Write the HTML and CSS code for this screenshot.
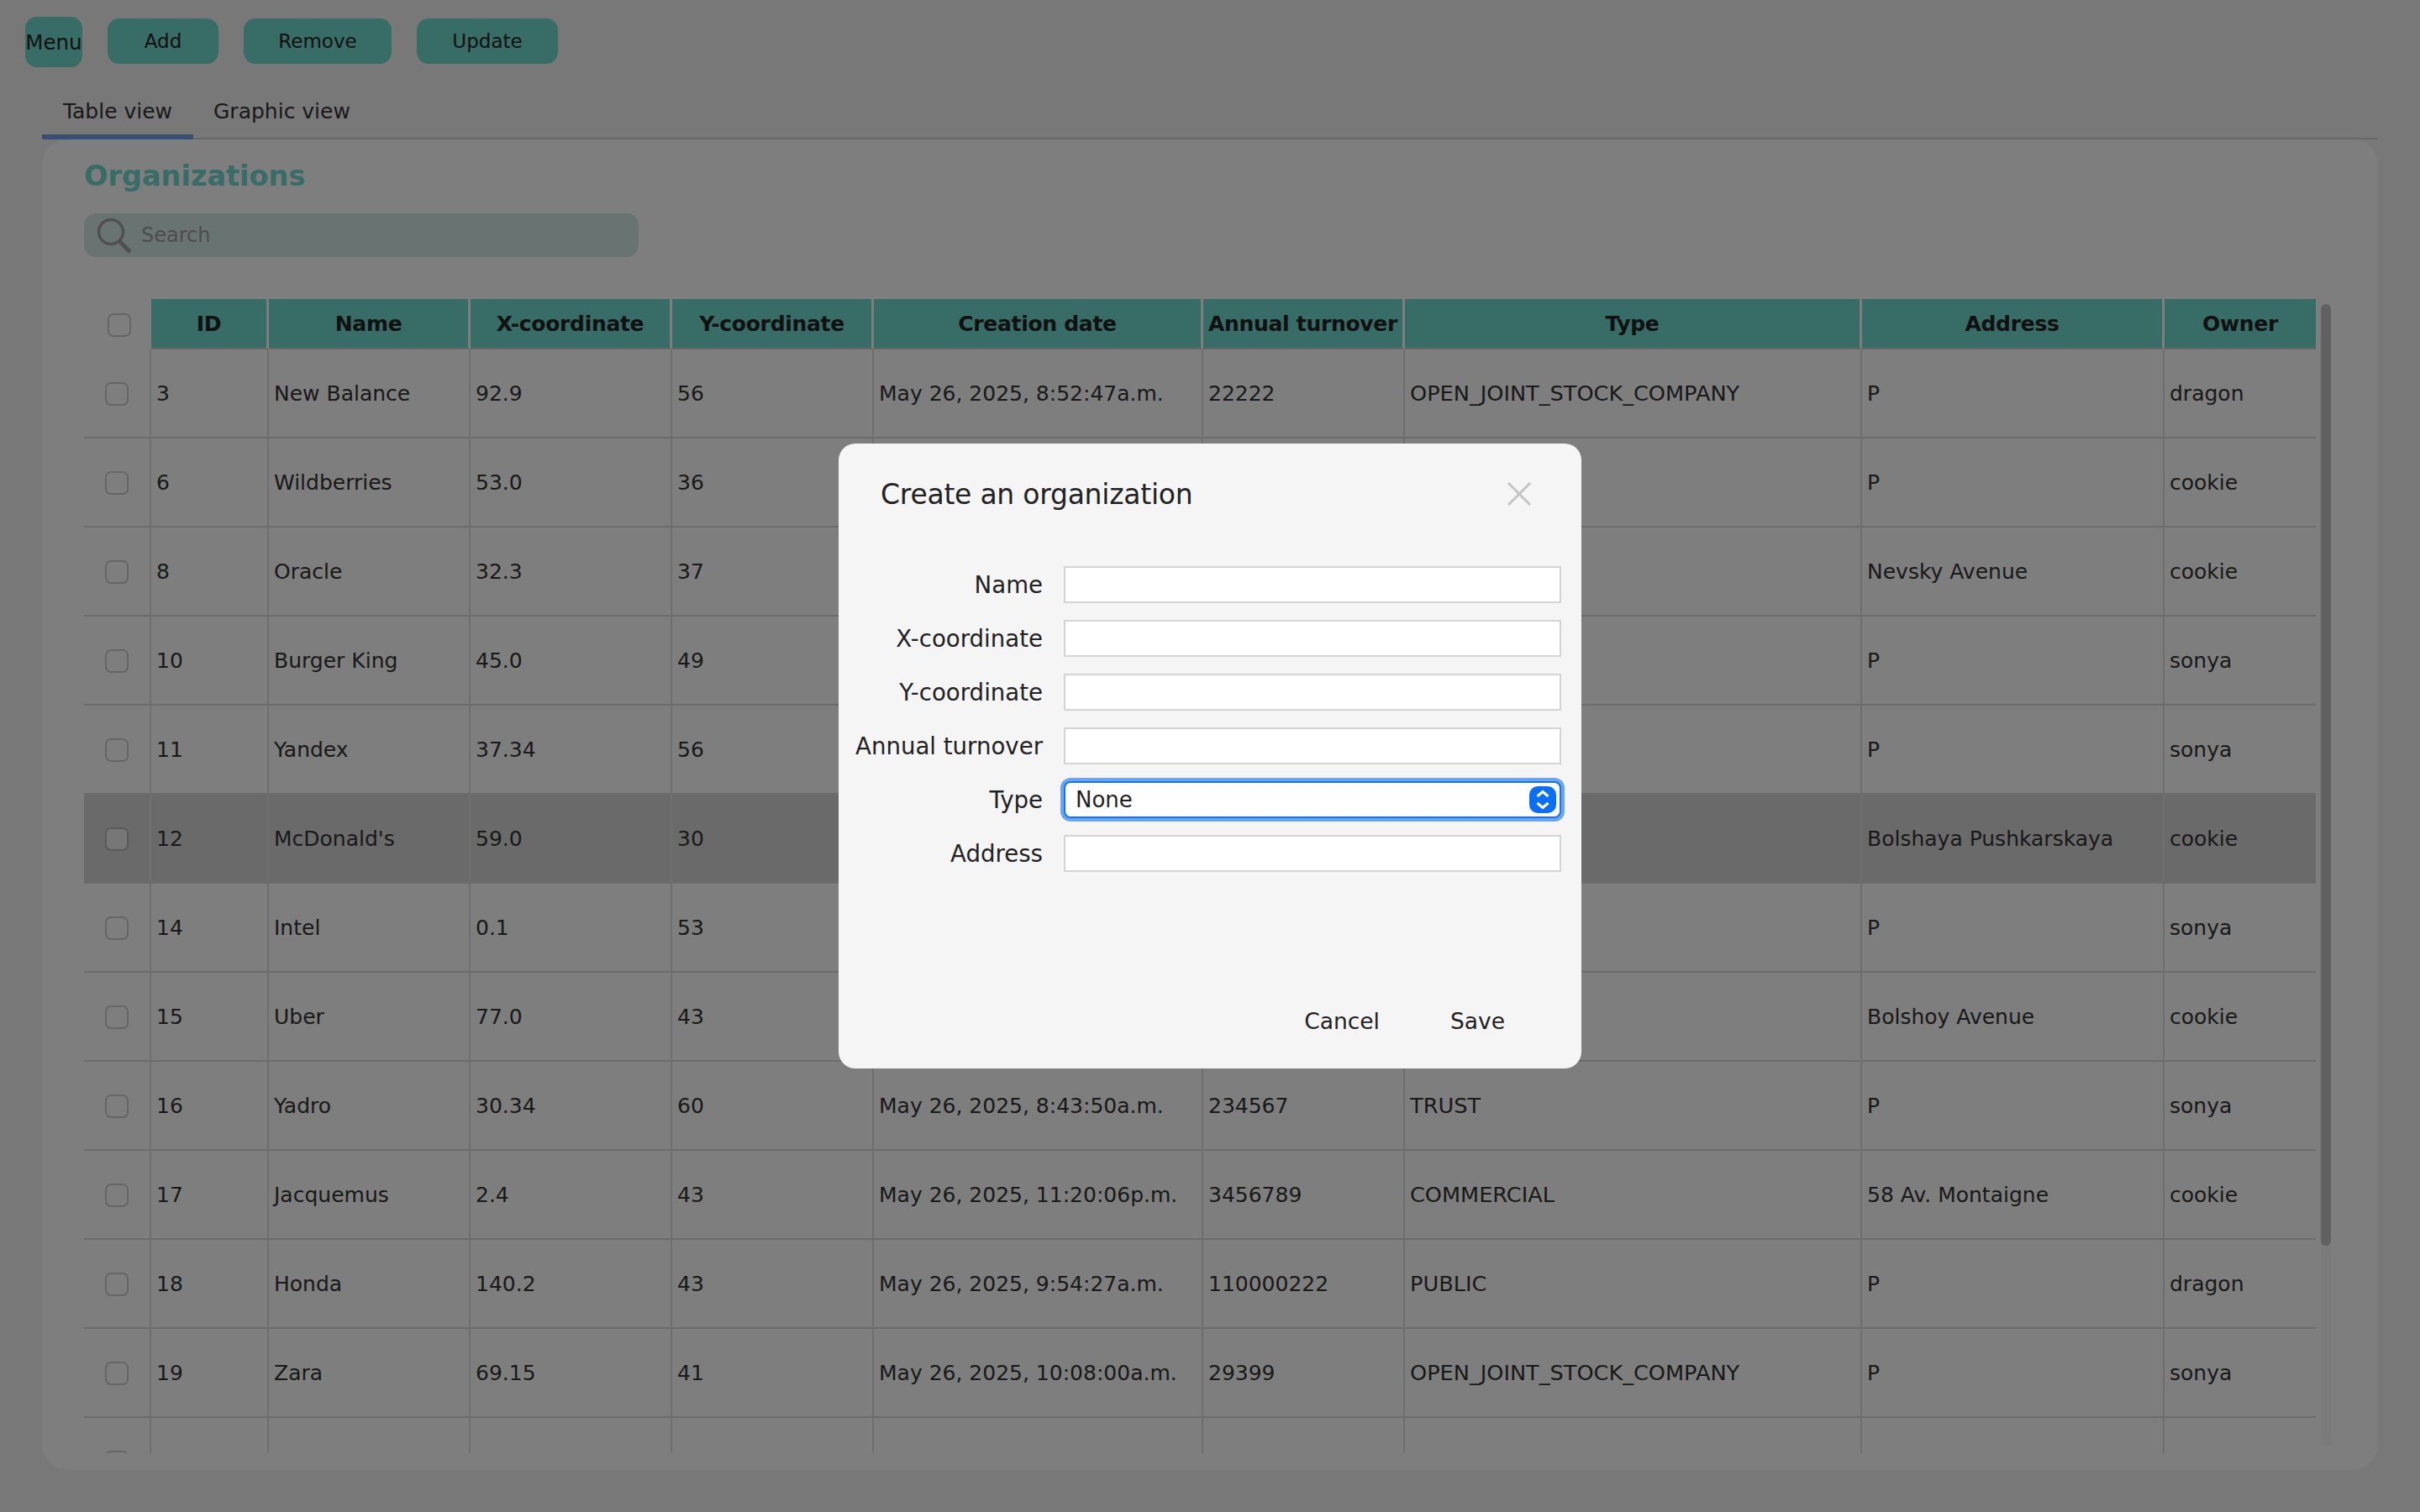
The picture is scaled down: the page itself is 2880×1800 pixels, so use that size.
FILE: index.html
```html
<!DOCTYPE html>
<html>
<head>
<meta charset="utf-8">
<title>Organizations</title>
<link rel="stylesheet" href="styles.css">
</head>
<body>

<div class="toolbar">
  <button class="tool tool-menu">Menu</button>
  <button class="tool tool-add">Add</button>
  <button class="tool tool-remove">Remove</button>
  <button class="tool tool-update">Update</button>
</div>

<div class="tabs">
  <div class="tab tab-active">Table view</div>
  <div class="tab">Graphic view</div>
</div>

<div class="panel">
  <h2 class="panel-title">Organizations</h2>
  <div class="search">
    <svg class="search-icon" viewBox="0 0 44 44" width="44" height="44">
      <circle cx="18" cy="18" r="14.5" fill="none" stroke="#a0a0a0" stroke-width="3.5"/>
      <line x1="28" y1="29" x2="41" y2="42" stroke="#a0a0a0" stroke-width="5"/>
    </svg>
    <span class="search-text">Search</span>
  </div>

  <div class="table-wrap">
    <table class="org-table">
      <colgroup>
        <col class="c-check"><col class="c-id"><col class="c-name"><col class="c-x"><col class="c-y">
        <col class="c-date"><col class="c-turn"><col class="c-type"><col class="c-addr"><col class="c-owner">
      </colgroup>
      <thead>
        <tr>
          <th class="check-head"><span class="check"></span></th>
          <th>ID</th><th>Name</th><th>X-coordinate</th><th>Y-coordinate</th>
          <th>Creation date</th><th>Annual turnover</th><th>Type</th><th>Address</th><th>Owner</th>
        </tr>
      </thead>
      <tbody>
        <tr>
          <td class="check-cell"><span class="check"></span></td>
          <td>3</td><td>New Balance</td><td>92.9</td><td>56</td>
          <td>May 26, 2025, 8:52:47a.m.</td><td>22222</td><td>OPEN_JOINT_STOCK_COMPANY</td><td>P</td><td>dragon</td>
        </tr>
        <tr>
          <td class="check-cell"><span class="check"></span></td>
          <td>6</td><td>Wildberries</td><td>53.0</td><td>36</td>
          <td></td><td></td><td></td><td>P</td><td>cookie</td>
        </tr>
        <tr>
          <td class="check-cell"><span class="check"></span></td>
          <td>8</td><td>Oracle</td><td>32.3</td><td>37</td>
          <td></td><td></td><td></td><td>Nevsky Avenue</td><td>cookie</td>
        </tr>
        <tr>
          <td class="check-cell"><span class="check"></span></td>
          <td>10</td><td>Burger King</td><td>45.0</td><td>49</td>
          <td></td><td></td><td></td><td>P</td><td>sonya</td>
        </tr>
        <tr>
          <td class="check-cell"><span class="check"></span></td>
          <td>11</td><td>Yandex</td><td>37.34</td><td>56</td>
          <td></td><td></td><td></td><td>P</td><td>sonya</td>
        </tr>
        <tr class="selected">
          <td class="check-cell"><span class="check"></span></td>
          <td>12</td><td>McDonald's</td><td>59.0</td><td>30</td>
          <td></td><td></td><td></td><td>Bolshaya Pushkarskaya</td><td>cookie</td>
        </tr>
        <tr>
          <td class="check-cell"><span class="check"></span></td>
          <td>14</td><td>Intel</td><td>0.1</td><td>53</td>
          <td></td><td></td><td></td><td>P</td><td>sonya</td>
        </tr>
        <tr>
          <td class="check-cell"><span class="check"></span></td>
          <td>15</td><td>Uber</td><td>77.0</td><td>43</td>
          <td></td><td></td><td></td><td>Bolshoy Avenue</td><td>cookie</td>
        </tr>
        <tr>
          <td class="check-cell"><span class="check"></span></td>
          <td>16</td><td>Yadro</td><td>30.34</td><td>60</td>
          <td>May 26, 2025, 8:43:50a.m.</td><td>234567</td><td>TRUST</td><td>P</td><td>sonya</td>
        </tr>
        <tr>
          <td class="check-cell"><span class="check"></span></td>
          <td>17</td><td>Jacquemus</td><td>2.4</td><td>43</td>
          <td>May 26, 2025, 11:20:06p.m.</td><td>3456789</td><td>COMMERCIAL</td><td>58 Av. Montaigne</td><td>cookie</td>
        </tr>
        <tr>
          <td class="check-cell"><span class="check"></span></td>
          <td>18</td><td>Honda</td><td>140.2</td><td>43</td>
          <td>May 26, 2025, 9:54:27a.m.</td><td>110000222</td><td>PUBLIC</td><td>P</td><td>dragon</td>
        </tr>
        <tr>
          <td class="check-cell"><span class="check"></span></td>
          <td>19</td><td>Zara</td><td>69.15</td><td>41</td>
          <td>May 26, 2025, 10:08:00a.m.</td><td>29399</td><td>OPEN_JOINT_STOCK_COMPANY</td><td>P</td><td>sonya</td>
        </tr>
        <tr>
          <td class="check-cell"><span class="check"></span></td>
          <td></td><td></td><td></td><td></td><td></td><td></td><td></td><td></td><td></td>
        </tr>
      </tbody>
    </table>
    <div class="scrollbar"><div class="scroll-thumb"></div></div>
  </div>
</div>

<div class="overlay">
  <div class="dialog">
    <div class="dialog-head">
      <span class="dialog-title">Create an organization</span>
      <svg class="dialog-close" viewBox="0 0 28 28" width="28" height="28">
        <path d="M1 1 L27 27 M27 1 L1 27" fill="none" stroke="#c4c4c4" stroke-width="3"/>
      </svg>
    </div>
    <form class="dialog-form">
      <label class="field-label">Name</label><input class="field" type="text">
      <label class="field-label">X-coordinate</label><input class="field" type="text">
      <label class="field-label">Y-coordinate</label><input class="field" type="text">
      <label class="field-label">Annual turnover</label><input class="field" type="text">
      <label class="field-label">Type</label>
      <div class="select">
        <span>None</span>
        <svg class="select-arrows" viewBox="0 0 32 32" width="32" height="32">
          <rect width="32" height="32" rx="10" fill="#0a6ff5"/>
          <path d="M9.5 12 L16 6.5 L22.5 12 M9.5 20 L16 25.5 L22.5 20" fill="none" stroke="#fff" stroke-width="3"/>
        </svg>
      </div>
      <label class="field-label">Address</label><input class="field" type="text">
    </form>
    <div class="dialog-actions">
      <span class="action">Cancel</span>
      <span class="action">Save</span>
    </div>
  </div>
</div>

</body>
</html>
```

FILE: styles.css
```css
html, body {
  margin: 0;
  height: 100%;
}

body {
  position: relative;
  width: 2880px;
  height: 1800px;
  overflow: hidden;
  background-color: #f1f1f1;
  font-family: "DejaVu Sans", sans-serif;
  font-size: 25px;
  color: #333;
}

.toolbar {
  display: flex;
  align-items: flex-start;
  gap: 30px;
  height: 60px;
  padding: 20px 0 0 30px;
}

.tool {
  height: 54px;
  margin-top: 2px;
  padding: 0;
  border: none;
  border-radius: 14px;
  background-color: #70d8ce;
  color: #222;
  font-family: inherit;
  font-size: 23px;
}

.tool-menu {
  width: 68px;
  height: 60px;
  margin-top: 0;
  font-size: 24.5px;
}

.tool-add { width: 132px; }
.tool-remove { width: 176px; }
.tool-update { width: 168px; }

.tabs {
  display: flex;
  height: 86px;
  margin: 0 50px;
  box-sizing: border-box;
  border-bottom: 2px solid #cfcfcf;
}

.tab {
  padding: 38px 24px 0;
  font-size: 25px;
  color: #333;
}

.tab-active {
  width: 180px;
  box-sizing: border-box;
  margin-bottom: -2px;
  padding: 38px 0 0;
  text-align: center;
  border-bottom: 6px solid #6f9fe0;
  border-radius: 2px;
}

.panel {
  height: 1563px;
  margin: 0 50px;
  padding: 21px 0 0 50px;
  border-radius: 30px;
  background-color: #fcfcfc;
}

.panel-title {
  margin: 0;
  font-size: 33.5px;
  line-height: 46px;
  font-weight: bold;
  color: #70d8ce;
}

.search {
  display: flex;
  align-items: center;
  gap: 10px;
  width: 660px;
  height: 52px;
  margin-top: 21px;
  padding-left: 14px;
  box-sizing: border-box;
  border-radius: 14px;
  background-color: #d3e6e4;
}

.search-text {
  font-size: 24px;
  color: #9a9a9a;
}

.table-wrap {
  position: relative;
  width: 2680px;
  height: 1374px;
  margin-top: 50px;
  overflow: hidden;
}

.org-table {
  width: 2656px;
  table-layout: fixed;
  border-collapse: separate;
  border-spacing: 0;
}

.c-check { width: 80px; }
.c-id { width: 140px; }
.c-name { width: 240px; }
.c-x { width: 240px; }
.c-y { width: 240px; }
.c-date { width: 392px; }
.c-turn { width: 240px; }
.c-type { width: 544px; }
.c-addr { width: 360px; }
.c-owner { width: 180px; }

th {
  height: 58px;
  padding: 0;
  border-right: 3px solid #fcfcfc;
  border-bottom: 2px solid #cfcfcf;
  background-color: #70d8ce;
  font-size: 25px;
  letter-spacing: -0.3px;
  font-weight: bold;
  color: #222;
  text-align: center;
  white-space: nowrap;
}

th:last-child {
  border-right: none;
}

th.check-head {
  background-color: transparent;
  border: none;
}

th.check-head .check {
  margin-left: 4px;
}

td {
  height: 104px;
  padding: 0 0 0 6px;
  box-sizing: content-box;
  border-right: 2px solid #dedede;
  border-bottom: 2px solid #d9d9d9;
  font-size: 25px;
  color: #333;
  white-space: nowrap;
}

td:nth-child(8) {
  font-size: 25.6px;
}

td:last-child {
  border-right: none;
}

td.check-cell {
  padding: 0;
  text-align: center;
}

.selected td {
  background-color: #d5d5d5;
}

.check {
  display: inline-block;
  width: 28px;
  height: 28px;
  box-sizing: border-box;
  vertical-align: middle;
  border: 2px solid #cdcdcd;
  border-radius: 7px;
}

.selected .check {
  background-color: #eeeeee;
  border-color: #b4b4b4;
}

.scrollbar {
  position: absolute;
  top: 6px;
  left: 2662px;
  width: 12px;
  height: 1361px;
  border-radius: 6px;
  background-color: #f6f6f6;
}

.scroll-thumb {
  height: 1121px;
  border-radius: 6px;
  background-color: #c2c2c2;
}

.overlay {
  position: absolute;
  top: 0;
  left: 0;
  width: 2880px;
  height: 1800px;
  background-color: rgba(0, 0, 0, 0.5);
}

.dialog {
  position: absolute;
  top: 528px;
  left: 998px;
  display: flex;
  flex-direction: column;
  width: 884px;
  height: 744px;
  box-sizing: border-box;
  border-radius: 20px;
  background-color: #f5f5f5;
}

.dialog-head {
  display: flex;
  justify-content: space-between;
  align-items: center;
  padding: 40px 60px 0 50px;
  height: 40px;
}

.dialog-title {
  font-size: 33px;
  letter-spacing: -0.25px;
  color: #222;
}

.dialog-form {
  display: grid;
  grid-template-columns: 243px 592px;
  column-gap: 25px;
  row-gap: 20px;
  align-items: center;
  margin-top: 66px;
}

.field-label {
  font-size: 27.6px;
  color: #222;
  text-align: right;
  white-space: nowrap;
}

.field {
  width: 592px;
  height: 44px;
  box-sizing: border-box;
  padding: 0;
  border: 2px solid #d4d4d4;
  background-color: #fff;
}

.select {
  display: flex;
  justify-content: space-between;
  align-items: center;
  width: 592px;
  height: 44px;
  box-sizing: border-box;
  padding: 0 4px 0 12px;
  border: 2px solid #1a73e8;
  border-radius: 8px;
  background-color: #fff;
  box-shadow: 0 0 0 4px #6aa5f5;
  font-size: 26px;
  color: #222;
}

.dialog-actions {
  display: flex;
  justify-content: flex-end;
  gap: 84px;
  margin-top: auto;
  padding: 0 91px 41px 0;
}

.action {
  font-size: 26.5px;
  color: #222;
}
```
